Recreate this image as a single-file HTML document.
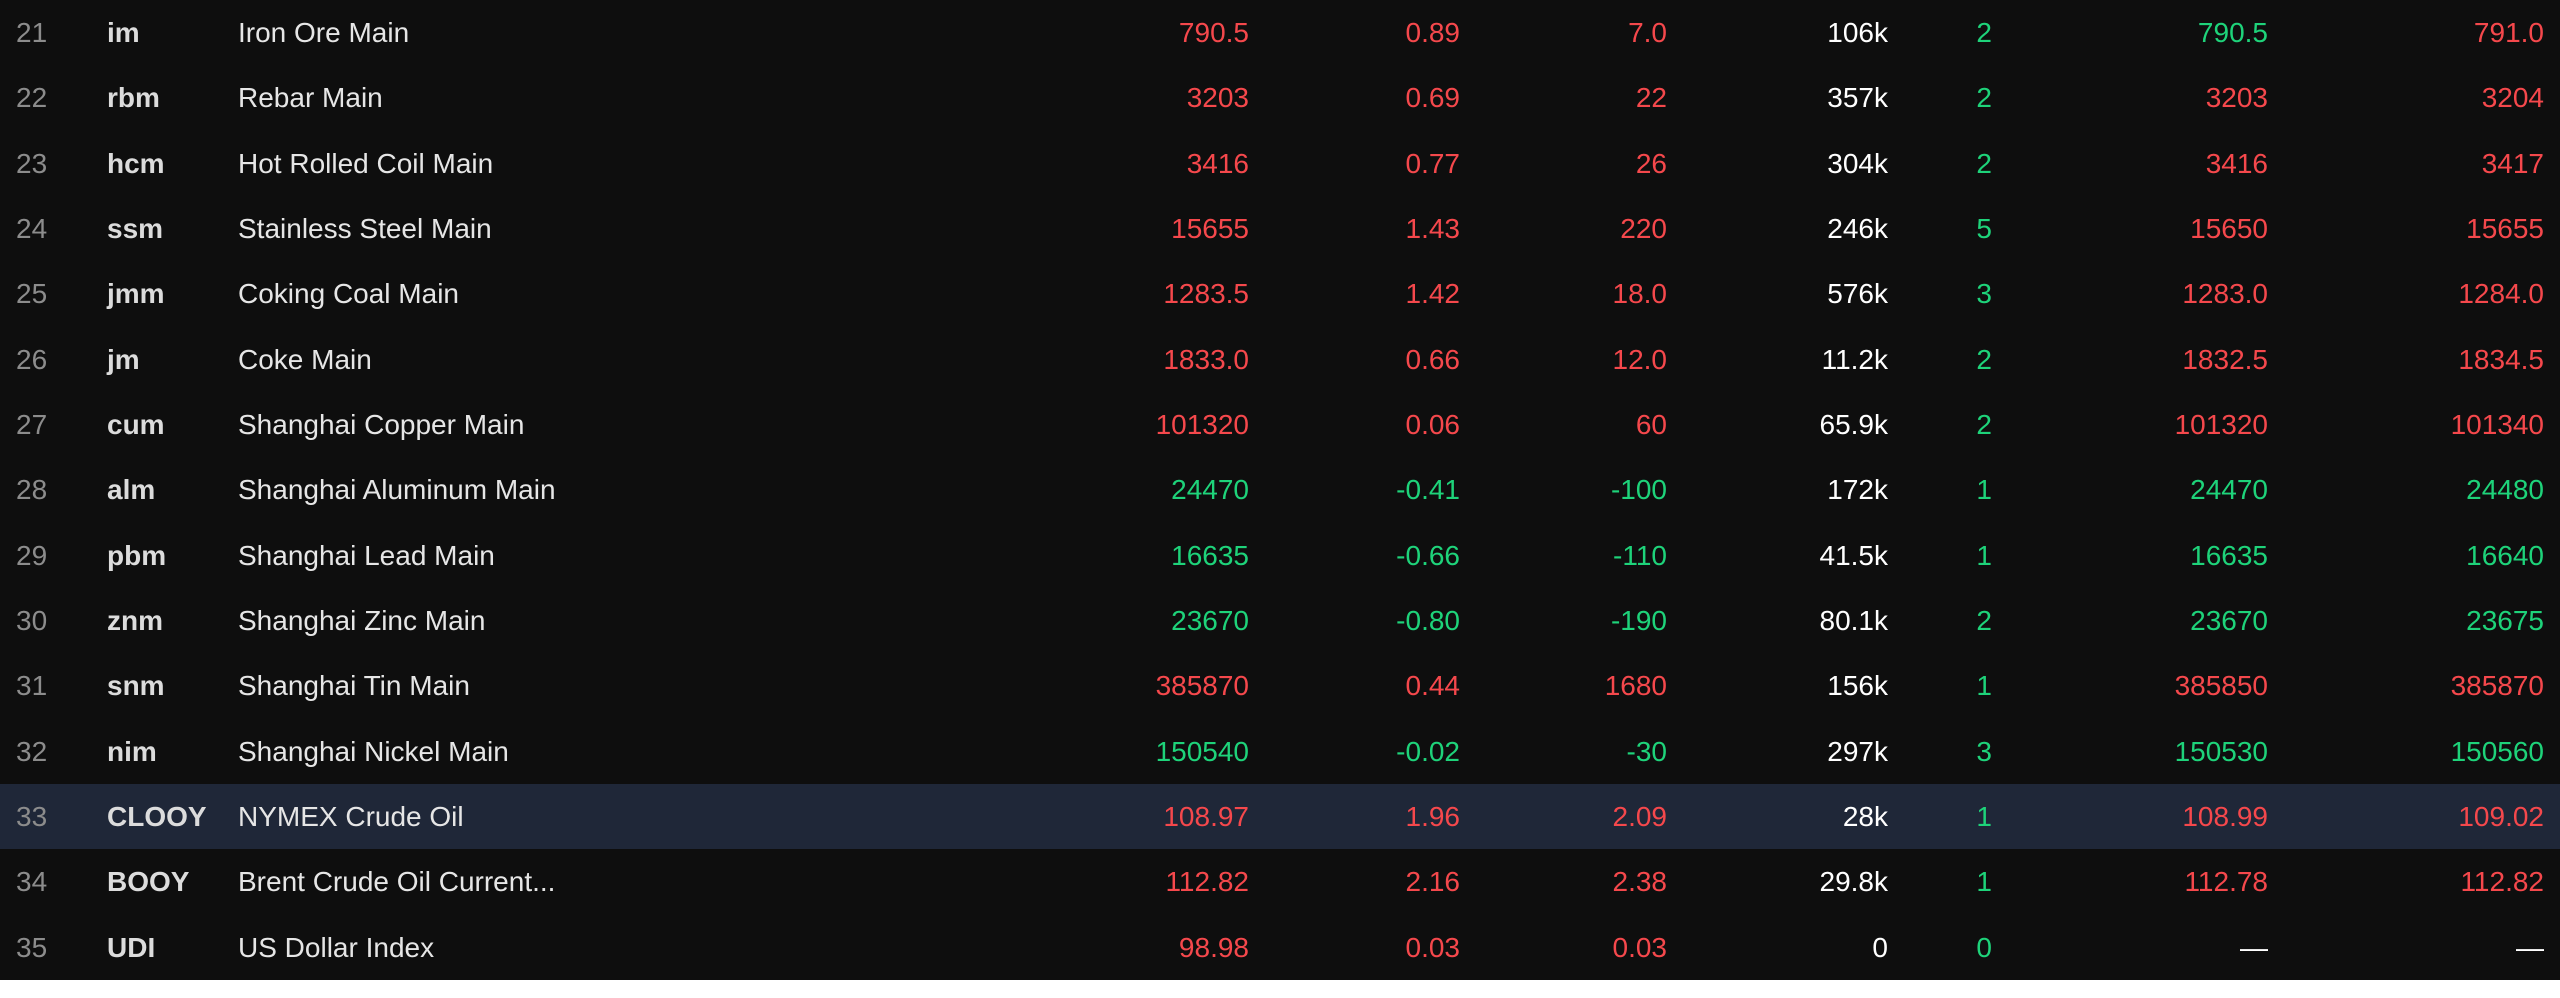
<!DOCTYPE html>
<html><head><meta charset="utf-8"><style>
html,body{margin:0;padding:0;background:#fff;width:2560px;height:998px;overflow:hidden}
.t{position:absolute;left:0;top:0;width:2560px;height:980px;background:#0e0e0e;font-family:"Liberation Sans",sans-serif;font-size:28px}
.r{position:absolute;left:0;width:2560px;height:65.33px}
.r.h{background:#1f2738}
.r span{position:absolute;top:0;line-height:65.33px;white-space:nowrap}
.n{left:16px;color:#8c8c8c}
.c{left:107px;color:#dcdcdc;font-weight:bold}
.m{left:238px;color:#e6e6e6}
.a{right:1311px}.b{right:1100px}.d{right:893px}.e{right:672px;color:#fff}.f{right:568px;color:#1ed37a}.g{right:292px}.k{right:16px}
.R{color:#f5484c}.G{color:#1ed37a}.W{color:#fff}
</style></head><body><div class="t">
<div class="r" style="top:0"><span class="n">21</span><span class="c">im</span><span class="m">Iron Ore Main</span><span class="a R">790.5</span><span class="b R">0.89</span><span class="d R">7.0</span><span class="e">106k</span><span class="f">2</span><span class="g G">790.5</span><span class="k R">791.0</span></div>
<div class="r" style="top:65.33px"><span class="n">22</span><span class="c">rbm</span><span class="m">Rebar Main</span><span class="a R">3203</span><span class="b R">0.69</span><span class="d R">22</span><span class="e">357k</span><span class="f">2</span><span class="g R">3203</span><span class="k R">3204</span></div>
<div class="r" style="top:130.67px"><span class="n">23</span><span class="c">hcm</span><span class="m">Hot Rolled Coil Main</span><span class="a R">3416</span><span class="b R">0.77</span><span class="d R">26</span><span class="e">304k</span><span class="f">2</span><span class="g R">3416</span><span class="k R">3417</span></div>
<div class="r" style="top:196px"><span class="n">24</span><span class="c">ssm</span><span class="m">Stainless Steel Main</span><span class="a R">15655</span><span class="b R">1.43</span><span class="d R">220</span><span class="e">246k</span><span class="f">5</span><span class="g R">15650</span><span class="k R">15655</span></div>
<div class="r" style="top:261.33px"><span class="n">25</span><span class="c">jmm</span><span class="m">Coking Coal Main</span><span class="a R">1283.5</span><span class="b R">1.42</span><span class="d R">18.0</span><span class="e">576k</span><span class="f">3</span><span class="g R">1283.0</span><span class="k R">1284.0</span></div>
<div class="r" style="top:326.67px"><span class="n">26</span><span class="c">jm</span><span class="m">Coke Main</span><span class="a R">1833.0</span><span class="b R">0.66</span><span class="d R">12.0</span><span class="e">11.2k</span><span class="f">2</span><span class="g R">1832.5</span><span class="k R">1834.5</span></div>
<div class="r" style="top:392px"><span class="n">27</span><span class="c">cum</span><span class="m">Shanghai Copper Main</span><span class="a R">101320</span><span class="b R">0.06</span><span class="d R">60</span><span class="e">65.9k</span><span class="f">2</span><span class="g R">101320</span><span class="k R">101340</span></div>
<div class="r" style="top:457.33px"><span class="n">28</span><span class="c">alm</span><span class="m">Shanghai Aluminum Main</span><span class="a G">24470</span><span class="b G">-0.41</span><span class="d G">-100</span><span class="e">172k</span><span class="f">1</span><span class="g G">24470</span><span class="k G">24480</span></div>
<div class="r" style="top:522.67px"><span class="n">29</span><span class="c">pbm</span><span class="m">Shanghai Lead Main</span><span class="a G">16635</span><span class="b G">-0.66</span><span class="d G">-110</span><span class="e">41.5k</span><span class="f">1</span><span class="g G">16635</span><span class="k G">16640</span></div>
<div class="r" style="top:588px"><span class="n">30</span><span class="c">znm</span><span class="m">Shanghai Zinc Main</span><span class="a G">23670</span><span class="b G">-0.80</span><span class="d G">-190</span><span class="e">80.1k</span><span class="f">2</span><span class="g G">23670</span><span class="k G">23675</span></div>
<div class="r" style="top:653.33px"><span class="n">31</span><span class="c">snm</span><span class="m">Shanghai Tin Main</span><span class="a R">385870</span><span class="b R">0.44</span><span class="d R">1680</span><span class="e">156k</span><span class="f">1</span><span class="g R">385850</span><span class="k R">385870</span></div>
<div class="r" style="top:718.67px"><span class="n">32</span><span class="c">nim</span><span class="m">Shanghai Nickel Main</span><span class="a G">150540</span><span class="b G">-0.02</span><span class="d G">-30</span><span class="e">297k</span><span class="f">3</span><span class="g G">150530</span><span class="k G">150560</span></div>
<div class="r h" style="top:784px"><span class="n">33</span><span class="c">CLOOY</span><span class="m">NYMEX Crude Oil</span><span class="a R">108.97</span><span class="b R">1.96</span><span class="d R">2.09</span><span class="e">28k</span><span class="f">1</span><span class="g R">108.99</span><span class="k R">109.02</span></div>
<div class="r" style="top:849.33px"><span class="n">34</span><span class="c">BOOY</span><span class="m">Brent Crude Oil Current...</span><span class="a R">112.82</span><span class="b R">2.16</span><span class="d R">2.38</span><span class="e">29.8k</span><span class="f">1</span><span class="g R">112.78</span><span class="k R">112.82</span></div>
<div class="r" style="top:914.67px"><span class="n">35</span><span class="c">UDI</span><span class="m">US Dollar Index</span><span class="a R">98.98</span><span class="b R">0.03</span><span class="d R">0.03</span><span class="e">0</span><span class="f">0</span><span class="g W">—</span><span class="k W">—</span></div>
</div></body></html>
